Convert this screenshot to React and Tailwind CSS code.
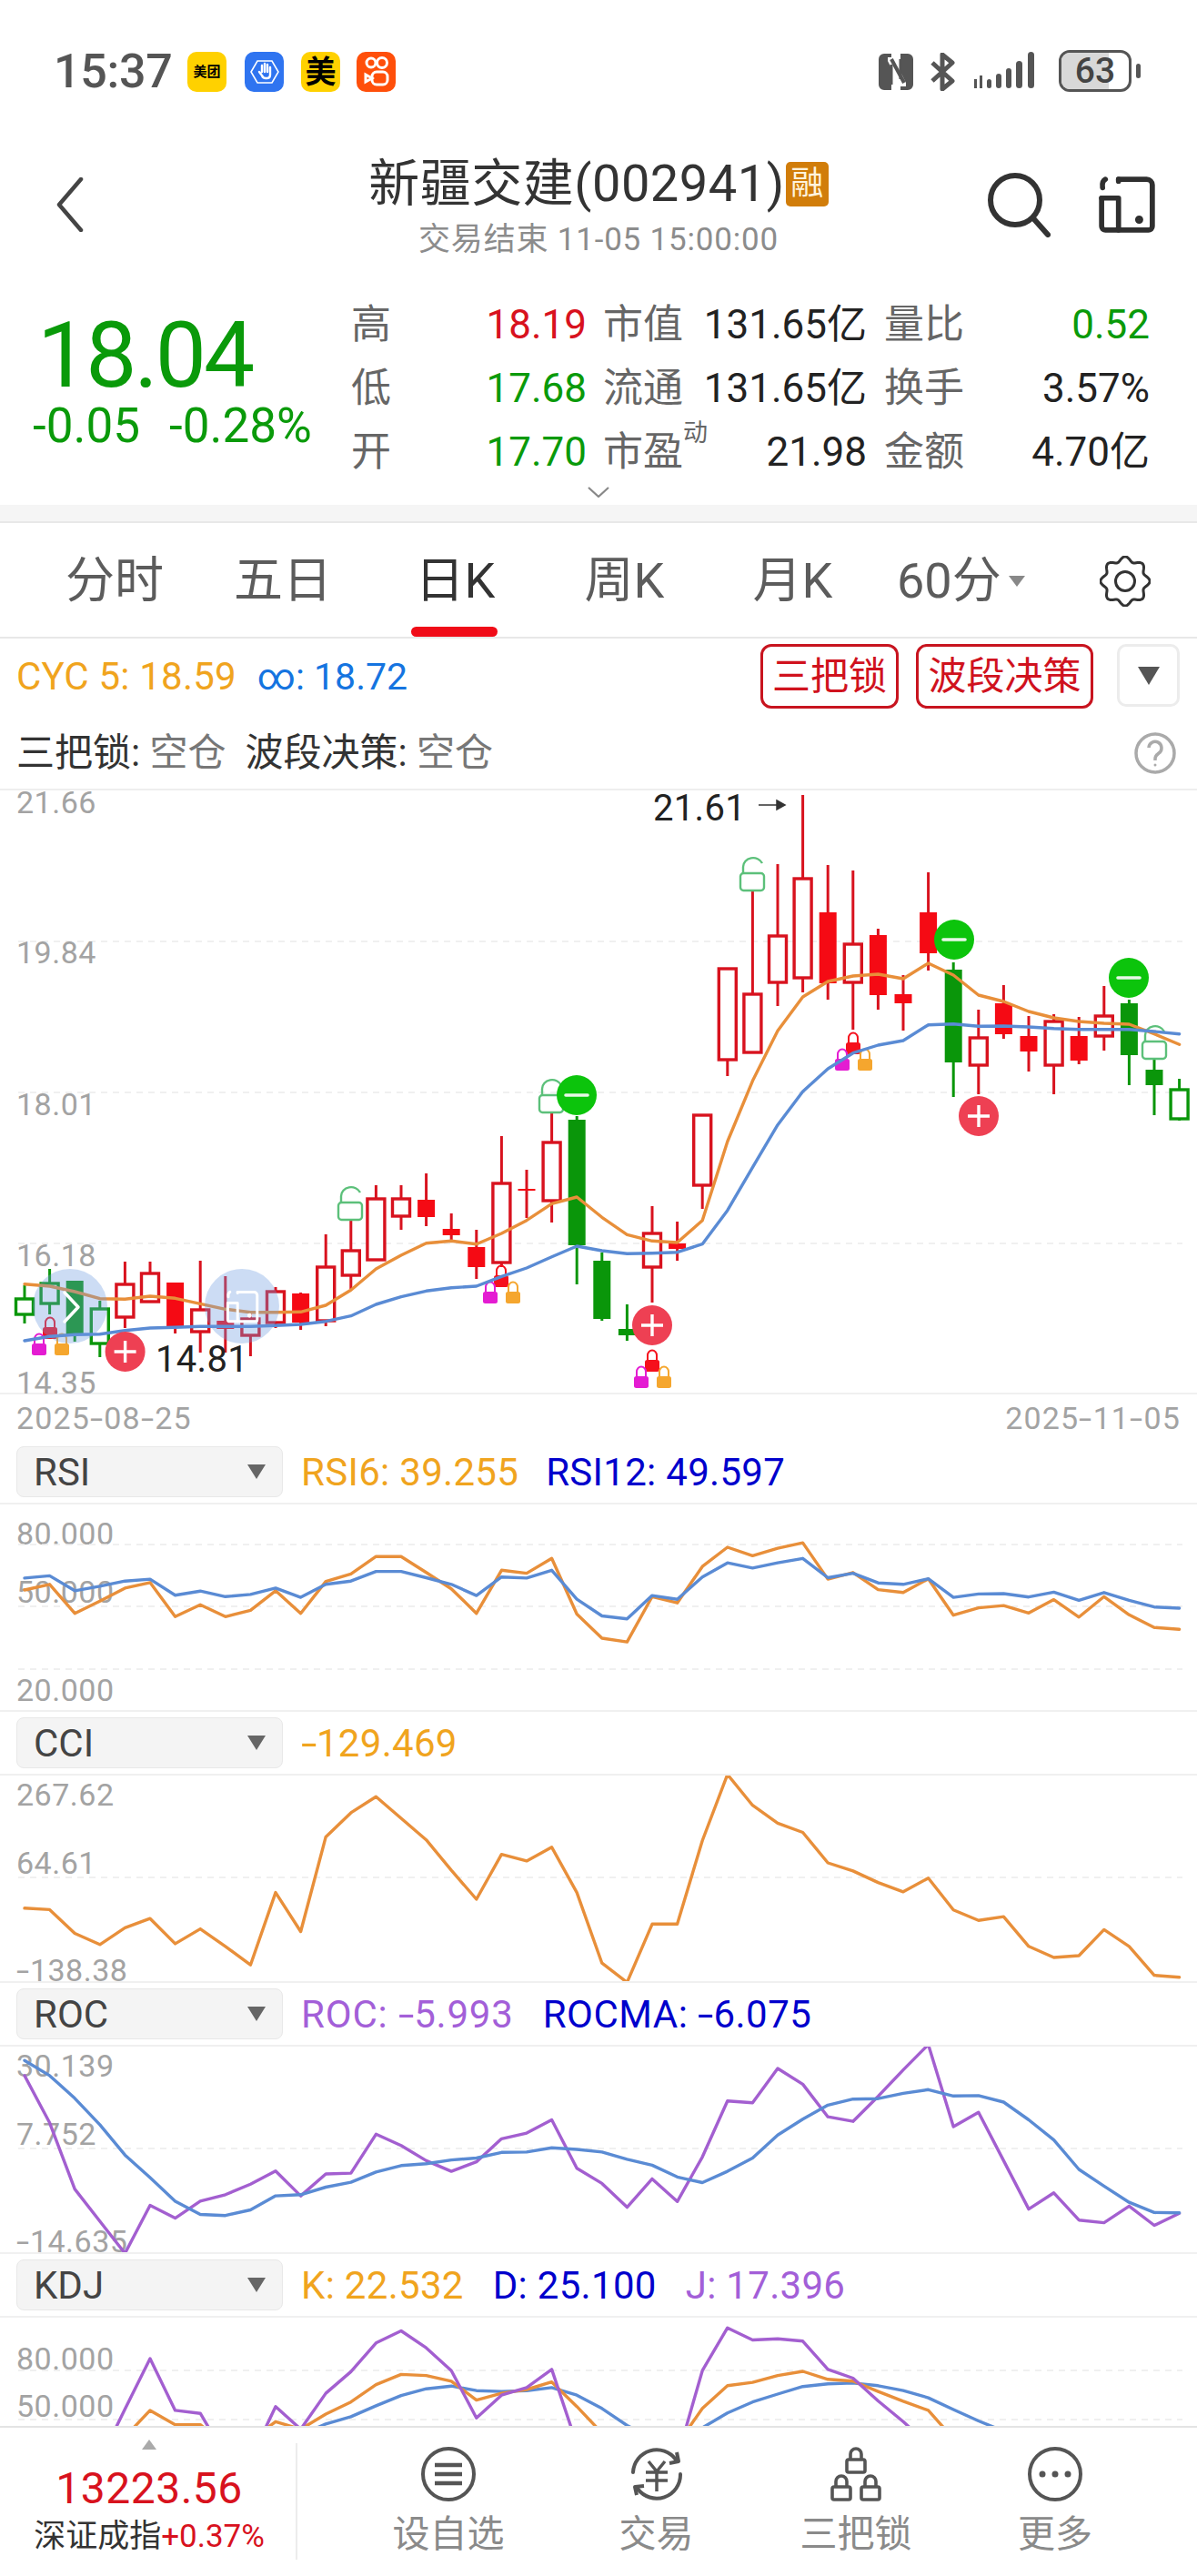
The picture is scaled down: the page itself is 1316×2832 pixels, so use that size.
import React from "react";

const FONT = { fontFamily: '"Roboto","Noto Sans CJK SC",sans-serif' };
const XS = (i) => 27 + 27.6 * i;
const m = (z) => 1120 + z / 3;
const toPts = (arr, f) => arr.map((v, i) => `${XS(i).toFixed(1)},${f(v).toFixed(1)}`).join(" ");

const C_RED = "#d8121e";
const C_SOLID = "#f50a14";
const C_GREEN = "#0a960a";
const C_OR = "#e88f3a";
const C_BL = "#5a8bd4";
const C_PU = "#a35fd0";

// [high, top, bottom, low, solid?, green?]
const candles = [
  [1413,1428,1445,1455,0,1],[1395,1411,1433,1445,0,1],[1408,1408,1467,1475,1,1],[1430,1439,1477,1492,0,1],
  [1387,1412,1448,1460,0,0],[1387,1400,1431,1432,0,0],[1410,1410,1460,1466,1,0],[1386,1440,1464,1487,0,0],
  [1403,1452,1461,1487,1,0],[1442,1450,1468,1491,0,0],[1415,1420,1454,1460,0,0],[1421,1422,1454,1462,1,0],
  [1357,1393,1452,1458,0,0],[1340,1375,1402,1417,0,0],[1303,1318,1385,1385,0,0],[1303,1318,1337,1352,0,0],
  [1290,1319,1338,1348,1,0],[1334,1351,1358,1363,1,0],[1352,1371,1393,1406,1,0],[1249,1301,1388,1393,0,0],
  [1286,1307,1309,1339,1,0],[1223,1256,1320,1344,0,0],[1227,1231,1369,1412,1,1],[1377,1386,1450,1452,1,1],
  [1434,1461,1468,1474,1,1],[1326,1356,1393,1432,0,0],[1343,1367,1373,1386,1,0],[1226,1226,1303,1329,0,0],
  [1065,1065,1165,1183,0,0],[980,1093,1157,1157,0,0],[950,1029,1080,1106,0,0],[874,966,1075,1091,0,0],
  [951,1003,1081,1099,1,0],[957,1038,1080,1132,0,0],[1021,1028,1094,1110,1,0],[1072,1093,1103,1133,1,0],
  [959,1003,1048,1067,1,0],[1058,1066,1168,1206,1,1],[1110,1141,1171,1203,0,0],[1083,1103,1137,1142,1,0],
  [1117,1139,1156,1178,1,0],[1115,1123,1171,1203,0,0],[1118,1139,1166,1170,1,0],[1084,1117,1139,1155,0,0],
  [1099,1103,1160,1193,1,1],[1163,1176,1193,1226,1,1],[1186,1198,1230,1232,0,1],
];

const maOr = [875,882,900,923,925,915,922,940,958,968,968,967,945,895,825,780,740,733,743,708,665,610,588,655,712,733,738,665,405,205,40,-72,-123,-141,-147,-132,-183,-144,-78,-57,-24,-3,9,15,18,50,85];
const maBl = [1062,1048,1042,1040,1028,1020,1018,1015,1015,1015,1012,1008,998,980,942,917,898,887,882,850,822,785,750,765,775,773,770,743,632,490,350,240,165,113,87,72,20,17,25,24,27,32,35,35,35,42,50];

const r = (z) => 1550 + z / 2.45;
const rsiOr = [485,470,548,515,480,465,557,525,557,540,487,548,462,442,395,395,438,482,548,432,440,400,550,615,625,503,520,422,370,393,373,358,456,438,484,492,455,553,533,527,547,511,558,503,552,586,591];
const rsiBl = [453,447,487,475,461,456,499,488,503,497,480,505,470,461,435,435,452,470,500,450,453,432,510,555,563,500,510,450,412,426,412,400,452,440,466,470,455,505,496,495,504,491,513,492,513,531,534];
const cci = [1342,1346,1410,1440,1395,1370,1438,1398,1445,1495,1300,1405,1150,1085,1042,1100,1158,1240,1318,1197,1215,1178,1300,1490,1542,1385,1385,1160,982,1065,1113,1138,1220,1242,1273,1298,1261,1347,1375,1365,1445,1475,1470,1400,1445,1523,1528];

const k = (z) => 2180 + z / 2.405;
const rocPu = [245,370,545,630,715,588,622,577,560,532,497,563,505,503,400,430,470,498,473,412,397,362,490,530,593,518,578,460,312,317,226,268,354,366,300,230,163,380,342,470,598,555,627,634,590,641,609];
const rocBl = [205,245,305,375,455,515,577,612,615,600,563,560,540,527,500,483,478,468,463,448,447,436,440,447,466,482,513,528,498,463,402,360,323,307,306,292,282,299,298,315,362,415,493,537,580,607,608];
const kdjJ = [1500,1500,1400,1262,1127,993,1130,1138,1250,1260,1120,1180,1085,1028,952,920,965,1025,1150,1090,1070,1022,1220,1300,1400,1350,1256,1025,912,944,941,947,1022,1045,1105,1160,1220,1300,1400,1500,1500,1500,1500,1500,1500,1500,1500];
const kdjK = [1400,1400,1350,1250,1200,1130,1168,1168,1220,1210,1160,1180,1140,1108,1062,1035,1038,1053,1103,1085,1075,1055,1120,1190,1260,1270,1220,1125,1065,1056,1038,1027,1048,1053,1080,1106,1130,1205,1280,1350,1400,1400,1400,1400,1400,1400,1400];
const kdjD = [1350,1350,1330,1300,1270,1230,1225,1225,1240,1235,1215,1195,1166,1147,1118,1091,1073,1066,1078,1080,1078,1070,1090,1125,1170,1205,1215,1176,1137,1108,1087,1067,1060,1058,1065,1078,1097,1128,1158,1185,1230,1270,1300,1320,1340,1350,1350];

const Dash = () => <span className="inline-block origin-left scale-x-150 mr-[5px]">-</span>;

function Line({ pts, c, w = 3.4 }) {
  return <polyline points={pts} fill="none" stroke={c} strokeWidth={w} strokeLinejoin="round" strokeLinecap="round" />;
}
function Grid({ y }) {
  return <line x1="20" x2="1300" y1={y} y2={y} stroke="#ececec" strokeWidth="1.5" strokeDasharray="7 6" />;
}
function Lock({ x, y, c }) {
  return (
    <g>
      <path d={`M${x - 5} ${y - 2}v-5a5 5.5 0 0 1 10 0v5`} fill="none" stroke={c} strokeWidth="2" />
      <rect x={x - 8} y={y - 2} width="16" height="13" rx="2.5" fill={c} />
    </g>
  );
}
function Triple({ x, y }) {
  return (
    <g>
      <Lock x={x} y={y} c="#f5101c" />
      <Lock x={x - 12} y={y + 18} c="#e41cd2" />
      <Lock x={x + 13} y={y + 18} c="#f5a62e" />
    </g>
  );
}
function Unlock({ x, y }) {
  return (
    <g fill="none" stroke="#5cc07a" strokeWidth="2.4">
      <rect x={x - 13} y={y - 1} width="26" height="19" rx="3.5" />
      <path d={`M${x - 10} ${y - 1}v-7a11 10 0 0 1 21 -4`} />
    </g>
  );
}
function Plus({ x, y }) {
  return (
    <g>
      <circle cx={x} cy={y} r="22" fill="#ee4053" />
      <path d={`M${x - 12} ${y}h24M${x} ${y - 12}v24`} stroke="#fff" strokeWidth="3.4" />
    </g>
  );
}
function Minus({ x, y }) {
  return (
    <g>
      <circle cx={x} cy={y} r="22" fill="#0cc40c" />
      <path d={`M${x - 12} ${y}h24`} stroke="#e8f8e8" strokeWidth="3.6" strokeLinecap="round" />
    </g>
  );
}
function PhoneIcon({ c, sw = 4 }) {
  return (
    <g fill="none" stroke={c} strokeWidth={sw} strokeLinecap="round" strokeLinejoin="round">
      <path d="M22 4h30a6 6 0 0 1 6 6v44a4 4 0 0 1-4 4H8a4 4 0 0 1-4-4V24" />
      <path d="M4 24h18M22 24v34M22 4v2" />
      <path d="M8 4q-4 2-3 9" />
      <circle cx="44" cy="47" r="1.6" fill={c} />
    </g>
  );
}

function MainChart() {
  return (
    <svg className="absolute inset-0" width="1316" height="664" viewBox="0 869 1316 664">
      {[1035, 1201, 1367].map((y) => <Grid key={y} y={y} />)}
      {candles.map((c, i) => {
        const x = XS(i);
        const col = c[5] ? C_GREEN : C_RED;
        const fill = c[5] ? C_GREEN : C_SOLID;
        return (
          <g key={i}>
            <line x1={x} x2={x} y1={c[0]} y2={c[3]} stroke={col} strokeWidth="3" />
            {c[4] ? (
              <rect x={x - 9.5} y={c[1]} width="19" height={c[2] - c[1]} fill={fill} />
            ) : (
              <rect x={x - 9.5} y={c[1]} width="19" height={c[2] - c[1]} fill="#fff" stroke={col} strokeWidth="3.4" />
            )}
          </g>
        );
      })}
      <Triple x={55} y={1461} />
      <Triple x={551} y={1404} />
      <Triple x={717} y={1497} />
      <Triple x={938} y={1148} />
      <Unlock x={385} y={1323} />
      <Unlock x={606} y={1205} />
      <Unlock x={827} y={961} />
      <Unlock x={1269} y={1146} />
      <Line pts={toPts(maOr, m)} c={C_OR} />
      <Line pts={toPts(maBl, m)} c={C_BL} />
      <Plus x={137.6} y={1486} />
      <Plus x={717} y={1457} />
      <Plus x={1076} y={1227} />
      <Minus x={634} y={1204} />
      <Minus x={1049} y={1033} />
      <Minus x={1241} y={1075} />
      <circle cx="77" cy="1436" r="41" fill="#6c9be0" fillOpacity="0.35" />
      <path d="M71 1421l15 16-15 16" fill="none" stroke="#fff" strokeWidth="3.5" strokeLinecap="round" strokeLinejoin="round" />
      <circle cx="266" cy="1436" r="41" fill="#6c9be0" fillOpacity="0.35" />
      <g transform="translate(248 1418) scale(0.6)"><PhoneIcon c="#fff" sw="5" /></g>
      <path d="M834 885h27m-7-5l9 5-9 5z" fill="#333" stroke="#333" strokeWidth="1.5" />
    </svg>
  );
}

function Axis({ top, children }) {
  return (
    <div className="absolute left-[18px] leading-none text-[34px] tracking-[0.5px] text-[#a3a3a3] whitespace-pre" style={{ top }}>
      {children}
    </div>
  );
}

function ChartBox({ h, top, children, labels }) {
  return (
    <div className="relative w-full border-b-2 border-[#f0f0f0] shrink-0" style={{ height: h }}>
      {labels.map(([t, y], i) => <Axis key={i} top={y - top}>{t}</Axis>)}
      <svg className="absolute inset-0" width="1316" height={h - 2} viewBox={`0 ${top} 1316 ${h - 2}`}>
        {children}
      </svg>
    </div>
  );
}

function Picker({ name }) {
  return (
    <div className="w-[293px] h-[56px] ml-[18px] rounded-lg bg-[#f4f4f4] border border-[#e8e8e8] flex items-center justify-between pl-[18px] pr-[18px] text-[42px] text-[#444]">
      <span>{name}</span>
      <svg width="20" height="16" viewBox="0 0 20 16"><path d="M0 0h20L10 16z" fill="#666" /></svg>
    </div>
  );
}

function IndHead({ name, gap = 30, children }) {
  return (
    <div className="h-[70px] flex items-center border-b-2 border-[#f0f0f0] shrink-0">
      <Picker name={name} />
      <div className="ml-[20px] pt-[1px] text-[42px] tracking-[0.3px] flex whitespace-pre" style={{ gap }}>{children}</div>
    </div>
  );
}

function Row({ l, v, vc, m1, m1x, mv, r1, rv, rc = "text-[#222]" }) {
  return (
    <div className="flex items-center h-[70px]">
      <span className="w-[107px] text-[44px] text-[#666]">{l}</span>
      <span className={`w-[152px] text-right text-[44px] ${vc}`}>{v}</span>
      <span className="ml-[18px] w-[88px] text-[44px] text-[#666] relative">
        {m1}
        {m1x && <span className="absolute left-[88px] -top-[8px] text-[27px] text-[#666]">{m1x}</span>}
      </span>
      <span className="w-[202px] text-right text-[44px] text-[#222]">{mv}</span>
      <span className="ml-[19px] w-[88px] text-[44px] text-[#666]">{r1}</span>
      <span className={`w-[204px] text-right text-[44px] ${rc}`}>{rv}</span>
    </div>
  );
}

function Gear() {
  const pts = [];
  for (let i = 0; i < 128; i++) {
    const a = (i / 128) * Math.PI * 2;
    const R = 24.5 + 2.6 * Math.cos(8 * a);
    pts.push(`${(28 + Math.sin(a) * R).toFixed(1)},${(28 - Math.cos(a) * R).toFixed(1)}`);
  }
  return (
    <svg width="56" height="56" viewBox="0 0 56 56" fill="none" stroke="#333" strokeWidth="3">
      <polygon points={pts.join(" ")} strokeLinejoin="round" />
      <circle cx="28" cy="28" r="10.5" />
    </svg>
  );
}

function Tab({ w, active, children, ml = 0 }) {
  return (
    <div className={`relative h-full flex items-center justify-center pt-[2px] text-[54px] ${active ? "text-[#333] pl-[2px]" : "text-[#5c5c5c]"}`} style={{ width: w, marginLeft: ml }}>
      {children}
      {active && <div className="absolute bottom-0 left-0 right-0 h-[11px] rounded-full bg-[#f00c18]" />}
    </div>
  );
}

function FootItem({ w, label, children }) {
  return (
    <div className="flex flex-col items-center" style={{ width: w }}>
      <div className="h-[60px] w-[60px]">{children}</div>
      <div className="mt-[13px] text-[41px] leading-[46px] text-[#8a8a8a] whitespace-nowrap">{label}</div>
    </div>
  );
}

function LockGlyph({ x, y }) {
  return (
    <g>
      <path d={`M${x - 6} ${y}v-6a6 6 0 0 1 12 0v6`} />
      <rect x={x - 10} y={y} width="20" height="14" rx="2" />
    </g>
  );
}

export default function App() {
  return (
    <div className="w-[1316px] h-[2832px] overflow-hidden bg-white flex flex-col relative" style={FONT}>
      {/* status bar */}
      <div className="h-[156px] shrink-0 flex items-start pt-[55px] pl-[59px] pr-[62px]">
        <span className="text-[52px] leading-[48px] font-medium text-[#555] tracking-[-0.3px] w-[147px]">15:37</span>
        <div className="w-[43px] h-[44px] rounded-[10px] bg-[#ffd100] flex items-center justify-center text-[15px] text-black font-bold mt-[2px]">美团</div>
        <div className="w-[43px] h-[44px] ml-[20px] rounded-[10px] bg-[#2f74f0] flex items-center justify-center mt-[2px]">
          <svg width="32" height="28" viewBox="0 0 32 28" fill="none" stroke="#fff" strokeWidth="1.6">
            <path d="M8 2h16l7 12-7 12H8L1 14z" />
            <path d="M10 14l3 4q1 3 4 3h2q3 0 3-4V9m-3 5V6m-3 8V5m-3 9V7" strokeWidth="2.4" strokeLinecap="round" />
          </svg>
        </div>
        <div className="w-[43px] h-[44px] ml-[19px] rounded-[10px] bg-[#ffd100] flex items-center justify-center text-[34px] leading-none text-black font-bold mt-[2px]">美</div>
        <div className="w-[43px] h-[44px] ml-[18px] rounded-[10px] bg-[#ff4f0a] flex items-center justify-center mt-[2px]">
          <svg width="28" height="36" viewBox="0 0 28 36" fill="none" stroke="#fff" strokeWidth="3">
            <circle cx="8" cy="8" r="5" /><circle cx="20" cy="8" r="5.5" />
            <rect x="9" y="18" width="17" height="14" rx="5" /><path d="M9 25l-7-4v8z" />
          </svg>
        </div>
        <div className="flex-1" />
        <svg width="38" height="40" viewBox="0 0 38 40" className="mt-[4px]" fill="#555">
          <path d="M6 0h8v40H6a6 6 0 0 1-6-6V6a6 6 0 0 1 6-6zM24 0h8a6 6 0 0 1 6 6v28a6 6 0 0 1-6 6h-8z" />
          <path d="M10 4h6l14 28v4h-6L10 8z" fill="#fff" />
          <path d="M14 6l14 26" stroke="#555" strokeWidth="4" fill="none" />
          <path d="M14 12v22M24 6v22" stroke="#555" strokeWidth="3" fill="none" />
        </svg>
        <svg width="28" height="42" viewBox="0 0 28 42" className="ml-[18px] mt-[3px]" fill="none" stroke="#555" strokeWidth="5">
          <path d="M3 11l22 20-11 9V2l11 9L3 31" strokeLinejoin="round" />
        </svg>
        <svg width="72" height="42" viewBox="0 0 72 42" className="ml-[21px] mt-[2px]" fill="#555">
          <rect x="0" y="30" width="3" height="10" /><rect x="6" y="26" width="3" height="14" />
          <rect x="14" y="30" width="5" height="10" rx="2.5" /><rect x="24" y="24" width="6" height="16" rx="3" />
          <rect x="35" y="18" width="6" height="22" rx="3" /><rect x="46" y="10" width="7" height="30" rx="3.5" />
          <rect x="59" y="0" width="7" height="40" rx="3.5" />
        </svg>
        <div className="relative w-[80px] h-[46px] ml-[21px] rounded-[12px] border-[3px] border-[#555] overflow-hidden">
          <div className="absolute left-0 top-0 bottom-0 w-[52px] bg-[#d8d8d8]" />
          <div className="absolute inset-0 flex items-center justify-center text-[39px] leading-none font-medium text-[#444]">63</div>
        </div>
        <div className="w-[5px] h-[16px] rounded-full bg-[#555] ml-[5px] mt-[15px]" />
      </div>

      {/* title */}
      <div className="h-[176px] shrink-0 relative">
        <svg width="30" height="60" viewBox="0 0 30 60" className="absolute left-[62px] top-[39px]" fill="none" stroke="#444" strokeWidth="4.5">
          <path d="M27 2L3 30l24 28" strokeLinecap="round" strokeLinejoin="round" />
        </svg>
        <div className="flex flex-col items-center">
          <div className="flex items-center h-[56px] mt-[18px]">
            <span className="text-[56px] leading-[56px] text-[#333] tracking-[0.5px]">新疆交建(002941)</span>
            <span className="ml-[1px] w-[47px] h-[49px] rounded-[5px] bg-[#d17d0a] flex items-center justify-center text-[36px] leading-none text-[#fff3dc]">融</span>
          </div>
          <div className="mt-[15px] text-[35px] leading-[38px] tracking-[0.8px] text-[#8c8c8c]">交易结束 11-05 15:00:00</div>
        </div>
        <svg width="72" height="72" viewBox="0 0 72 72" className="absolute left-[1083px] top-[33px]" fill="none" stroke="#333" strokeWidth="6">
          <circle cx="33" cy="31" r="27" /><path d="M53 51l16 18" strokeLinecap="round" />
        </svg>
        <svg width="64" height="66" viewBox="0 0 62 62" className="absolute left-[1207px] top-[36px]"><PhoneIcon c="#2f2f2f" sw="5.5" /></svg>
      </div>

      {/* quote */}
      <div className="h-[223px] shrink-0 relative flex">
        <div className="w-[386px] shrink-0 text-[#0a9a0a]">
          <div className="pl-[41px] pt-[9px] text-[100px] leading-[100px] tracking-[-3px]">18.04</div>
          <div className="pl-[36px] text-[53px] leading-[54px] flex gap-[32px]">
            <span>-0.05</span><span>-0.28%</span>
          </div>
        </div>
        <div className="-mt-[10px] relative">
          <Row l="高" v="18.19" vc="text-[#d8121e]" m1="市值" mv="131.65亿" r1="量比" rv="0.52" rc="text-[#0a9a0a]" />
          <Row l="低" v="17.68" vc="text-[#0a9a0a]" m1="流通" mv="131.65亿" r1="换手" rv="3.57%" />
          <Row l="开" v="17.70" vc="text-[#0a9a0a]" m1="市盈" m1x="动" mv="21.98" r1="金额" rv="4.70亿" />
        </div>
        <svg width="24" height="12" viewBox="0 0 24 12" className="absolute left-[646px] bottom-[8px]" fill="none" stroke="#888" strokeWidth="2.2">
          <path d="M1 1l11 10L23 1" />
        </svg>
      </div>

      {/* gap band */}
      <div className="h-[20px] shrink-0 bg-[#f5f5f5] border-b-2 border-[#e8e8e8]" />

      {/* tabs */}
      <div className="h-[127px] shrink-0 border-b-2 border-[#e8e8e8] flex items-stretch relative">
        <Tab w={108} ml={72}>分时</Tab>
        <Tab w={108} ml={77}>五日</Tab>
        <Tab w={95} ml={87} active>日K</Tab>
        <Tab w={95} ml={92}>周K</Tab>
        <Tab w={95} ml={90}>月K</Tab>
        <div className="flex items-center pt-[2px] ml-[67px] text-[54px] text-[#5c5c5c]">
          60分
          <svg width="18" height="12" viewBox="0 0 18 12" className="ml-[8px]"><path d="M0 0h18L9 12z" fill="#888" /></svg>
        </div>
        <div className="absolute left-[1209px] top-[36px]"><Gear /></div>
      </div>

      {/* legend */}
      <div className="h-[167px] shrink-0 border-b-2 border-[#eeeeee] relative">
        <div className="flex items-start pt-[6px] pl-[18px] pr-[19px]">
          <div className="flex-1 pt-[9px] text-[42px] tracking-[0.2px] leading-[54px] flex items-baseline gap-[23px] whitespace-pre">
            <span className="text-[#f0a41e]">CYC 5: 18.59</span>
            <span className="text-[#1574e0] text-[41px] tracking-[0px]">∞: 18.72</span>
          </div>
          <div className="w-[152px] h-[71px] rounded-[12px] border-[3px] border-[#c8141f] flex items-center justify-center text-[42px] text-[#d0121e]">三把锁</div>
          <div className="w-[195px] h-[71px] ml-[19px] rounded-[12px] border-[3px] border-[#c8141f] flex items-center justify-center text-[42px] text-[#d0121e]">波段决策</div>
          <div className="w-[69px] h-[69px] ml-[26px] rounded-[10px] border-[3px] border-[#ececec] flex items-center justify-center">
            <svg width="24" height="20" viewBox="0 0 24 20"><path d="M0 0h24L12 20z" fill="#555" /></svg>
          </div>
        </div>
        <div className="absolute left-[18px] top-[103px] text-[42px] leading-[46px] whitespace-pre">
          <span className="text-[#333]">三把锁: </span><span className="text-[#777]">空仓</span>
          <span className="text-[#333]">  波段决策: </span><span className="text-[#777]">空仓</span>
        </div>
        <svg width="48" height="48" viewBox="0 0 48 48" className="absolute left-[1246px] top-[102px]" fill="none" stroke="#aaa" strokeWidth="3.5">
          <circle cx="24" cy="24" r="21" />
          <path d="M17 18a7 7 0 1 1 11 6q-4 3-4 6v2" strokeWidth="3.5" />
          <circle cx="24" cy="37" r="1.5" fill="#aaa" stroke="none" />
        </svg>
      </div>

      {/* main chart */}
      <div className="relative h-[664px] shrink-0 border-b-2 border-[#f0f0f0]">
        <MainChart />
        <Axis top={-4}>21.66</Axis>
        <Axis top={161}>19.84</Axis>
        <Axis top={328}>18.01</Axis>
        <Axis top={494}>16.18</Axis>
        <Axis top={634}>14.35</Axis>
        <div className="absolute left-[718px] -top-[1px] text-[40px] tracking-[0.3px] leading-[42px] text-[#222]">21.61</div>
        <div className="absolute left-[171px] top-[605px] text-[40px] tracking-[0.3px] leading-[42px] text-[#222]">14.81</div>
      </div>

      {/* dates */}
      <div className="h-[51px] shrink-0 flex justify-between pl-[18px] pr-[18px] pt-[8px] text-[34px] leading-[36px] tracking-[1.1px] text-[#a3a3a3]">
        <span>2025<Dash />08<Dash />25</span>
        <span>2025<Dash />11<Dash />05</span>
      </div>

      <IndHead name="RSI">
        <span className="text-[#f0a41e]">RSI6: 39.255</span>
        <span className="text-[#0000cc]">RSI12: 49.597</span>
      </IndHead>
      <ChartBox h={228} top={1654} labels={[["80.000", 1669], ["50.000", 1733], ["20.000", 1841]]}>
        {[1698, 1766, 1835].map((y) => <Grid key={y} y={y} />)}
        <Line pts={toPts(rsiOr, r)} c={C_OR} />
        <Line pts={toPts(rsiBl, r)} c={C_BL} />
      </ChartBox>

      <IndHead name="CCI">
        <span className="text-[#f0a41e]"><Dash />129.469</span>
      </IndHead>
      <ChartBox h={228} top={1952} labels={[["267.62", 1956], ["64.61", 2031], [<><Dash />138.38</>, 2149]]}>
        <Grid y={2064} />
        <Line pts={toPts(cci, r)} c={C_OR} />
      </ChartBox>

      <IndHead name="ROC" gap={32}>
        <span className="text-[#a35fd8] tracking-[0.8px]">ROC: <Dash />5.993</span>
        <span className="text-[#0000cc] tracking-[0.5px]">ROCMA: <Dash />6.075</span>
      </IndHead>
      <ChartBox h={228} top={2250} labels={[["30.139", 2254], ["7.752", 2329], [<><Dash />14.635</>, 2447]]}>
        <Grid y={2362} />
        <Line pts={toPts(rocPu, k)} c={C_PU} />
        <Line pts={toPts(rocBl, k)} c={C_BL} />
      </ChartBox>

      <IndHead name="KDJ" gap={32}>
        <span className="text-[#f0a41e]">K: 22.532</span>
        <span className="text-[#0000cc]">D: 25.100</span>
        <span className="text-[#a35fd8]">J: 17.396</span>
      </IndHead>
      <div className="relative h-[119px] shrink-0 overflow-hidden">
        <Axis top={28}>80.000</Axis>
        <Axis top={80}>50.000</Axis>
        <svg className="absolute inset-0" width="1316" height="119" viewBox="0 2548 1316 119">
          <Grid y={2606} /><Grid y={2660} />
          <Line pts={toPts(kdjD, k)} c={C_BL} />
          <Line pts={toPts(kdjK, k)} c={C_OR} />
          <Line pts={toPts(kdjJ, k)} c={C_PU} />
        </svg>
      </div>

      {/* footer */}
      <div className="h-[165px] shrink-0 border-t-2 border-[#e4e4e4] bg-white flex relative">
        <div className="w-[327px] h-[128px] mt-[17px] border-r-2 border-[#ececec] flex flex-col items-center pl-[3px]">
          <svg width="16" height="11" viewBox="0 0 16 11" className="-mt-[4px]"><path d="M8 0l8 11H0z" fill="#aaa" /></svg>
          <div className="mt-[18px] text-[48px] tracking-[0.5px] leading-[50px] text-[#d8121e]">13223.56</div>
          <div className="mt-[8px] text-[35px] leading-[40px] whitespace-pre text-[#333]">深证成指<span className="text-[#d8121e]">+0.37%</span></div>
        </div>
        <div className="flex pt-[21px] ml-[52px]">
          <FootItem w={228} label="设自选">
            <svg width="60" height="60" viewBox="0 0 60 60" fill="none" stroke="#555" strokeWidth="4">
              <circle cx="30" cy="30" r="28" /><path d="M15 20h30M15 30h30M15 40h30" strokeWidth="4.5" />
            </svg>
          </FootItem>
          <FootItem w={229} label="交易">
            <svg width="60" height="60" viewBox="0 0 60 60" fill="none" stroke="#555" strokeWidth="4">
              <path d="M4 28A26 26 0 0 1 51 14M56 30A26 26 0 0 1 9 46" strokeLinecap="round" />
              <path d="M44 18l10-2-2-10M16 43l-10 1 2 9" strokeLinejoin="round" />
              <path d="M21 16l9 11 9-11M18 28h24M18 37h24M30 27v22" strokeWidth="3.5" />
            </svg>
          </FootItem>
          <FootItem w={210} label="三把锁">
            <svg width="60" height="60" viewBox="0 0 60 60" fill="none" stroke="#555" strokeWidth="3.6" strokeLinejoin="round">
              <LockGlyph x={30} y={14} />
              <LockGlyph x={14} y={44} />
              <LockGlyph x={46} y={44} />
            </svg>
          </FootItem>
          <FootItem w={228} label="更多">
            <svg width="60" height="60" viewBox="0 0 60 60" fill="none" stroke="#555" strokeWidth="4">
              <circle cx="30" cy="30" r="28" />
              <circle cx="16" cy="30" r="3.5" fill="#555" stroke="none" /><circle cx="30" cy="30" r="3.5" fill="#555" stroke="none" /><circle cx="44" cy="30" r="3.5" fill="#555" stroke="none" />
            </svg>
          </FootItem>
        </div>
      </div>
    </div>
  );
}
